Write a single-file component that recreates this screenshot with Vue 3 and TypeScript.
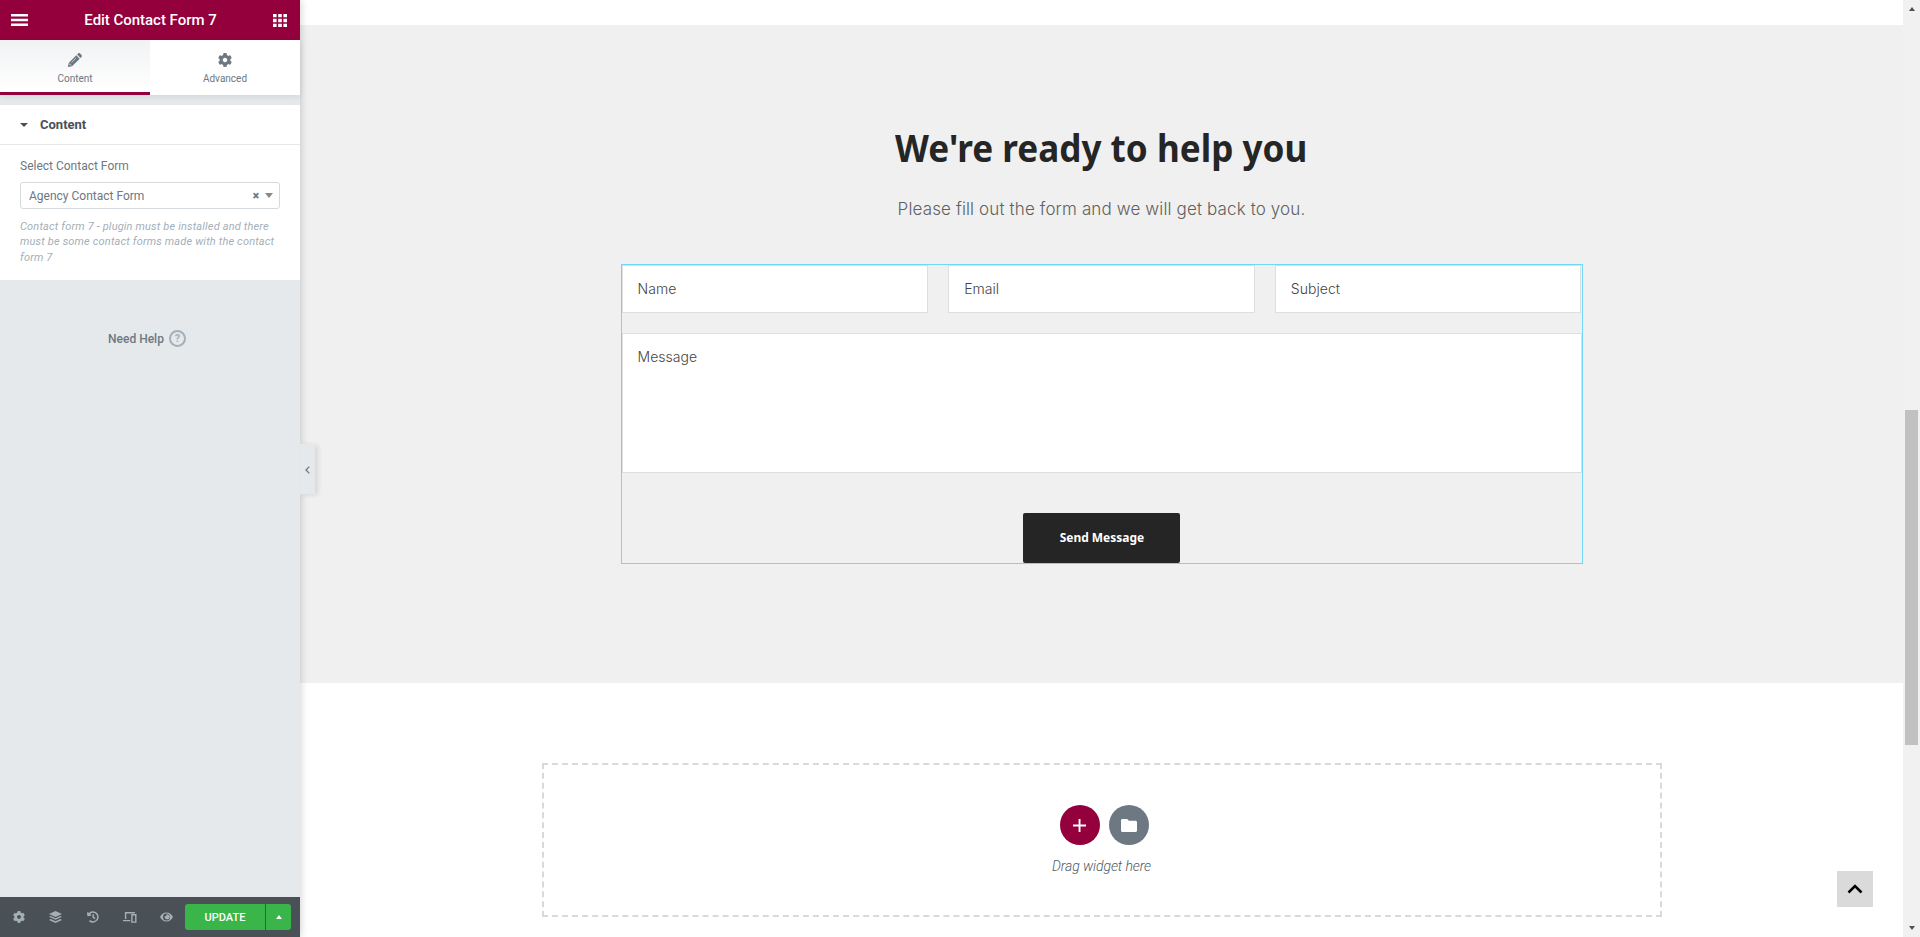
<script setup lang="ts">
import { ref } from 'vue'

interface Field {
  id: string
  label: string
}

const fields: Field[] = [
  { id: 'name', label: 'Name' },
  { id: 'email', label: 'Email' },
  { id: 'subject', label: 'Subject' },
]
const activeTab = ref<'content' | 'advanced'>('content')
const gear =
  'M487.4 315.7l-42.6-24.6c4.3-23.2 4.3-47 0-70.2l42.6-24.6c4.900-2.800 7.100-8.600 5.500-14-11.100-35.600-30-67.800-54.700-94.600-3.800-4.100-10-5.100-14.800-2.300L380.800 110c-17.900-15.400-38.500-27.300-60.800-35.100V25.800c0-5.600-3.900-10.500-9.400-11.700-36.700-8.200-74.300-7.800-109.200 0-5.500 1.200-9.400 6.100-9.400 11.700V75c-22.200 7.900-42.800 19.800-60.800 35.100L88.700 85.500c-4.900-2.800-11-1.900-14.800 2.300-24.700 26.700-43.600 58.900-54.700 94.600-1.700 5.400.6 11.200 5.500 14L67.300 221c-4.300 23.200-4.300 47 0 70.200l-42.600 24.600c-4.900 2.800-7.100 8.600-5.500 14 11.100 35.600 30 67.800 54.700 94.600 3.800 4.100 10 5.100 14.800 2.300l42.600-24.600c17.900 15.400 38.500 27.300 60.800 35.100v49.200c0 5.600 3.900 10.500 9.400 11.700 36.700 8.200 74.300 7.800 109.200 0 5.500-1.200 9.400-6.100 9.400-11.700v-49.200c22.200-7.900 42.800-19.800 60.800-35.100l42.600 24.600c4.900 2.800 11 1.900 14.800-2.300 24.700-26.700 43.600-58.900 54.700-94.600 1.500-5.500-.7-11.300-5.600-14.100zM256 336c-44.100 0-80-35.900-80-80s35.900-80 80-80 80 35.900 80 80-35.900 80-80 80z'
</script>

<template>
  <div class="editor">
    <aside class="panel">
      <header class="panel-header">
        <svg class="burger" viewBox="0 0 17 12"><path d="M0 0h17v2.500H0zM0 4.750h17v2.500H0zM0 9.500h17V12H0z" /></svg>
        <span class="panel-title">Edit Contact Form 7</span>
        <svg class="apps" viewBox="0 0 14 13">
          <path d="M0 0h3.600v3.300H0zM5.200 0h3.600v3.300H5.200zM10.400 0H14v3.300h-3.600zM0 4.850h3.600v3.300H0zM5.200 4.850h3.600v3.300H5.200zM10.400 4.850H14v3.300h-3.600zM0 9.700h3.600V13H0zM5.200 9.700h3.600V13H5.200zM10.400 9.700H14V13h-3.600z" />
        </svg>
      </header>

      <nav class="tabs">
        <div class="tab" :class="{ active: activeTab === 'content' }" @click="activeTab = 'content'">
          <svg viewBox="0 0 14 14">
            <path d="M8.300 2.300l3.400 3.400-7.600 7.600L.6 13.900c-.4.050-.7-.2-.6-.6l.7-3.400zM9.100 1.500l1-1c.6-.6 1.400-.6 2 0l1.400 1.400c.6.6.6 1.400 0 2l-1 1z" />
            <path class="pencil-line" d="M3.600 9.400l4.600-4.600M1.700 10.500l.2 1.400 1.500.3" />
          </svg>
          <span>Content</span>
        </div>
        <div class="tab" :class="{ active: activeTab === 'advanced' }" @click="activeTab = 'advanced'">
          <svg viewBox="8 8 496 496"><path :d="gear" /></svg>
          <span>Advanced</span>
        </div>
      </nav>

      <section class="section">
        <div class="section-head">
          <i class="caret-down"></i>
          <span>Content</span>
        </div>
        <div class="section-body">
          <label class="control-label">Select Contact Form</label>
          <div class="select">
            <span class="select-value">Agency Contact Form</span>
            <span class="clear">×</span>
            <i class="select-arrow"></i>
          </div>
          <p class="description">Contact form 7 - plugin must be installed and there must be some contact forms made with the contact form 7</p>
        </div>
      </section>

      <div class="help">
        <span>Need Help</span>
        <b class="help-mark">?</b>
      </div>

      <footer class="panel-footer">
        <div class="tools">
          <div class="tool"><svg width="12" height="12" viewBox="8 8 496 496"><path :d="gear" /></svg></div>
          <div class="tool">
            <svg width="13" height="12" viewBox="0 0 13 12">
              <path d="M6.500 0L13 3 6.500 6 0 3z" />
              <path d="M1.700 5L0 5.800l6.500 3 6.500-3L11.300 5 6.500 7.200zM1.700 8.100L0 8.900l6.500 3 6.500-3-1.700-.8-4.800 2.200z" />
            </svg>
          </div>
          <div class="tool">
            <svg class="line" width="12" height="12" viewBox="0 0 12 12">
              <path d="M1.300 4A5 5 0 1 1 2.500 9.600M.6 1.300l.5 3 3-.4M6.200 3.200v3l1.900 1.400" />
            </svg>
          </div>
          <div class="tool">
            <svg class="line thin" width="14" height="11" viewBox="0 0 14 11">
              <path d="M2.600 7V.8h9.300M0 8.600h7.300M8.900 2.800h3.900v7.300H8.900z" />
            </svg>
          </div>
          <div class="tool">
            <svg width="13" height="10" viewBox="0 0 13 10">
              <path fill-rule="evenodd" d="M6.500.4C3.500.4 1.200 2.300 0 5c1.200 2.700 3.500 4.600 6.500 4.600S11.800 7.700 13 5C11.800 2.300 9.500.4 6.500.4zm0 1.100a3.500 3.500 0 1 1 0 7 3.500 3.500 0 0 1 0-7z" />
              <path d="M6.400 2.300a1.200 1.200 0 0 1-1.700 1.600A2.600 2.600 0 1 0 6.400 2.300z" />
            </svg>
          </div>
        </div>
        <button class="update">UPDATE</button>
        <button class="update-more"><i class="caret-up"></i></button>
      </footer>
    </aside>

    <main class="preview">
      <section class="contact">
        <h2>We're ready to help you</h2>
        <p class="lead">Please fill out the form and we will get back to you.</p>
        <form class="widget" @submit.prevent>
          <div class="row">
            <div v-for="f in fields" :key="f.id" class="field">{{ f.label }}</div>
          </div>
          <div class="field message">Message</div>
          <button class="send"><span>Send Message</span></button>
        </form>
      </section>

      <section class="dropzone">
        <div class="circles">
          <div class="circle add"><svg width="13" height="13" viewBox="0 0 13 13"><path d="M5.600 0h1.900v5.600H13v1.900H7.500V13H5.600V7.500H0V5.600h5.600z" /></svg></div>
          <div class="circle folder"><svg width="16" height="13" viewBox="0 0 16 13"><path d="M1.500 0h4.700l1.700 1.700h6.600c.9 0 1.500.6 1.500 1.500v8.300c0 .9-.6 1.500-1.500 1.500h-13C.6 13 0 12.400 0 11.500v-10C0 .6.600 0 1.500 0z" /></svg></div>
        </div>
        <span class="drag">Drag widget here</span>
      </section>
    </main>

    <div class="scrollbar">
      <i class="sb-up"></i>
      <div class="thumb"></div>
      <i class="sb-down"></i>
    </div>

    <div class="collapse"><svg width="5" height="8" viewBox="0 0 5 8"><path d="M4.300.6L1 4l3.300 3.400" /></svg></div>
    <div class="to-top"><svg width="16" height="10" viewBox="0 0 16 10"><path d="M1.500 8.500L8 2l6.500 6.500" /></svg></div>
  </div>
</template>

<style>
body {
  margin: 0;
  overflow: hidden;
}
</style>

<style scoped>
* {
  box-sizing: border-box;
}
.editor {
  position: relative;
  display: flex;
  width: 1920px;
  height: 937px;
  overflow: hidden;
  background: #fff;
  font-family: Roboto, sans-serif;
}
svg {
  display: block;
  fill: currentColor;
}
button {
  border: 0;
  padding: 0;
}
.panel {
  position: relative;
  z-index: 1;
  flex: none;
  display: flex;
  flex-direction: column;
  width: 300px;
  height: 937px;
  background: #e6e9ec;
  color: #6d7882;
  box-shadow: 0 0 8px rgba(0, 0, 0, 0.22);
}
.panel-header {
  flex: none;
  display: flex;
  align-items: center;
  justify-content: space-between;
  height: 40px;
  padding: 0 13px 0 11px;
  background: #93003c;
  color: #fff;
}
.burger {
  width: 17px;
  height: 12px;
}
.apps {
  width: 14px;
  height: 13px;
}
.panel-title {
  font-size: 15px;
  font-weight: 500;
  letter-spacing: -0.03px;
}
.tabs {
  flex: none;
  display: flex;
  height: 55px;
  background: #fff;
  box-shadow: 0 2px 6px rgba(0, 0, 0, 0.08);
}
.tab {
  flex: 1;
  display: flex;
  flex-direction: column;
  align-items: center;
  padding-top: 13px;
  font-size: 10px;
  line-height: 12px;
}
.tab svg {
  width: 14px;
  height: 14px;
  margin-bottom: 6px;
}
.tab.active {
  background: linear-gradient(#f1f2f4, #fff);
  border-bottom: 3px solid #93003c;
}
.pencil-line {
  fill: none;
  stroke: #f8f9fa;
  stroke-width: 0.6;
}
.section {
  flex: none;
  height: 175px;
  margin-top: 10px;
  background: #fff;
}
.section-head {
  display: flex;
  align-items: center;
  gap: 12px;
  height: 40px;
  padding-left: 20px;
  border-bottom: 1px solid #e6e9ec;
  font-size: 13px;
  font-weight: 700;
  color: #495157;
}
.caret-down {
  border: 4px solid transparent;
  border-top-color: currentColor;
  border-bottom: 0;
}
.section-body {
  padding: 14px 20px 0;
}
.control-label {
  display: block;
  font-size: 12px;
  line-height: 15px;
}
.select {
  display: flex;
  align-items: center;
  height: 27px;
  margin-top: 8px;
  padding: 0 6px 0 8px;
  border: 1px solid #d5dadf;
  border-radius: 3px;
  font-size: 12px;
}
.select-value {
  flex: 1;
}
.clear {
  margin-right: 6px;
  font-size: 12px;
  font-weight: 900;
}
.select-arrow {
  border: 4px solid transparent;
  border-top: 5px solid #888;
  border-bottom: 0;
}
.description {
  margin: 10px -4px 0 0;
  font-size: 11px;
  line-height: 15.4px;
  font-style: italic;
  letter-spacing: 0.17px;
  color: #a4afb7;
}
.help {
  display: flex;
  align-items: center;
  justify-content: center;
  gap: 5px;
  margin: 50px 6px 0 0;
  font-size: 12px;
  font-weight: 500;
}
.help-mark {
  display: flex;
  align-items: center;
  justify-content: center;
  width: 17px;
  height: 17px;
  border: 2px solid #a4afb7;
  border-radius: 50%;
  font-size: 11px;
  color: #a4afb7;
}
.panel-footer {
  flex: none;
  display: flex;
  align-items: center;
  height: 40px;
  margin-top: auto;
  padding-right: 9px;
  background: #495157;
  color: #a4afb7;
}
.tools {
  flex: 1;
  display: flex;
}
.tool {
  flex: 1;
  display: flex;
  align-items: center;
  justify-content: center;
}
.line {
  fill: none;
  stroke: currentColor;
  stroke-width: 1.5;
}
.line.thin {
  stroke-width: 1.4;
}
.update,
.update-more {
  height: 26px;
  background: #39b54a;
  color: #fff;
}
.update {
  width: 80px;
  border-radius: 3px 0 0 3px;
  font: 500 11px Roboto, sans-serif;
}
.update-more {
  display: flex;
  align-items: center;
  justify-content: center;
  width: 25px;
  margin-left: 1px;
  border-radius: 0 3px 3px 0;
}
.caret-up {
  border: 3.5px solid transparent;
  border-bottom: 4px solid #fff;
  border-top: 0;
}
.preview {
  flex: none;
  display: flex;
  flex-direction: column;
  align-items: center;
  width: 1603px;
  padding-top: 25px;
}
.contact {
  display: flex;
  flex-direction: column;
  align-items: center;
  width: 100%;
  height: 658px;
  padding-top: 95px;
  background: #f0f0f0;
}
h2 {
  margin: 0;
  height: 56px;
  font: 700 37.500px/56px 'Noto Sans', sans-serif;
  white-space: nowrap;
  color: #252525;
  transform: scaleX(0.936);
}
.lead {
  margin: 20px 0 0;
  font: 350 17px/26px Inter, sans-serif;
  letter-spacing: 0.13px;
  color: #606060;
}
.widget {
  display: flex;
  flex-direction: column;
  align-items: center;
  width: 962px;
  height: 300px;
  margin-top: 42px;
  border: 1px solid #71d7f7;
}
.row {
  display: grid;
  grid-template-columns: repeat(3, 1fr);
  gap: 20px;
  width: 100%;
}
.field {
  height: 48px;
  padding: 13px 15px;
  border: 1px solid #dedede;
  background: #fff;
  font: 300 14px/19px Inter, sans-serif;
  letter-spacing: 0.05px;
  color: #444;
}
.field.message {
  width: 100%;
  height: 140px;
  margin-top: 20px;
}
.send {
  width: 157px;
  height: 50px;
  margin-top: 40px;
  padding-bottom: 2px;
  border-radius: 2px;
  background: #252525;
  color: #fff;
  font: 700 13px 'Noto Sans', sans-serif;
}
.send span {
  display: inline-block;
  transform: scaleX(0.92);
}
.dropzone {
  display: flex;
  flex-direction: column;
  align-items: center;
  width: 1120px;
  height: 154px;
  margin-top: 80px;
  padding-top: 40px;
  border: 2px dashed #d5dadf;
}
.circles {
  display: flex;
  gap: 9px;
  margin-left: 6px;
}
.circle {
  display: flex;
  align-items: center;
  justify-content: center;
  width: 40px;
  height: 40px;
  border-radius: 50%;
  color: #fff;
}
.add {
  padding-right: 1px;
  background: #93003c;
}
.folder {
  background: #6d7882;
}
.drag {
  margin-top: 13px;
  font: italic 300 14px/17px Roboto, sans-serif;
  letter-spacing: -0.1px;
  color: #4f5a64;
}
.scrollbar {
  display: flex;
  flex-direction: column;
  align-items: center;
  width: 17px;
  background: #f1f1f1;
}
.sb-up {
  margin-top: 7px;
  border: 3.5px solid transparent;
  border-bottom: 4px solid #505050;
  border-top: 0;
}
.thumb {
  width: 13px;
  height: 335px;
  margin-top: 399px;
  background: #c1c1c1;
}
.sb-down {
  margin: auto 0 7px;
  border: 3.5px solid transparent;
  border-top: 4px solid #505050;
  border-bottom: 0;
}
.collapse {
  position: absolute;
  z-index: 2;
  left: 300px;
  top: 444px;
  display: flex;
  align-items: center;
  justify-content: center;
  width: 15px;
  height: 50px;
  padding-top: 2px;
  background: #e6e9ec;
  color: #6d7882;
  box-shadow: 3px 1px 5px rgba(0, 0, 0, 0.1);
}
.collapse path,
.to-top path {
  fill: none;
  stroke: currentColor;
  stroke-width: 1.3;
}
.to-top {
  position: absolute;
  left: 1837px;
  top: 871px;
  display: flex;
  align-items: center;
  justify-content: center;
  width: 36px;
  height: 36px;
  background: #dadada;
  color: #000;
}
.to-top path {
  stroke-width: 2.5;
}
</style>
